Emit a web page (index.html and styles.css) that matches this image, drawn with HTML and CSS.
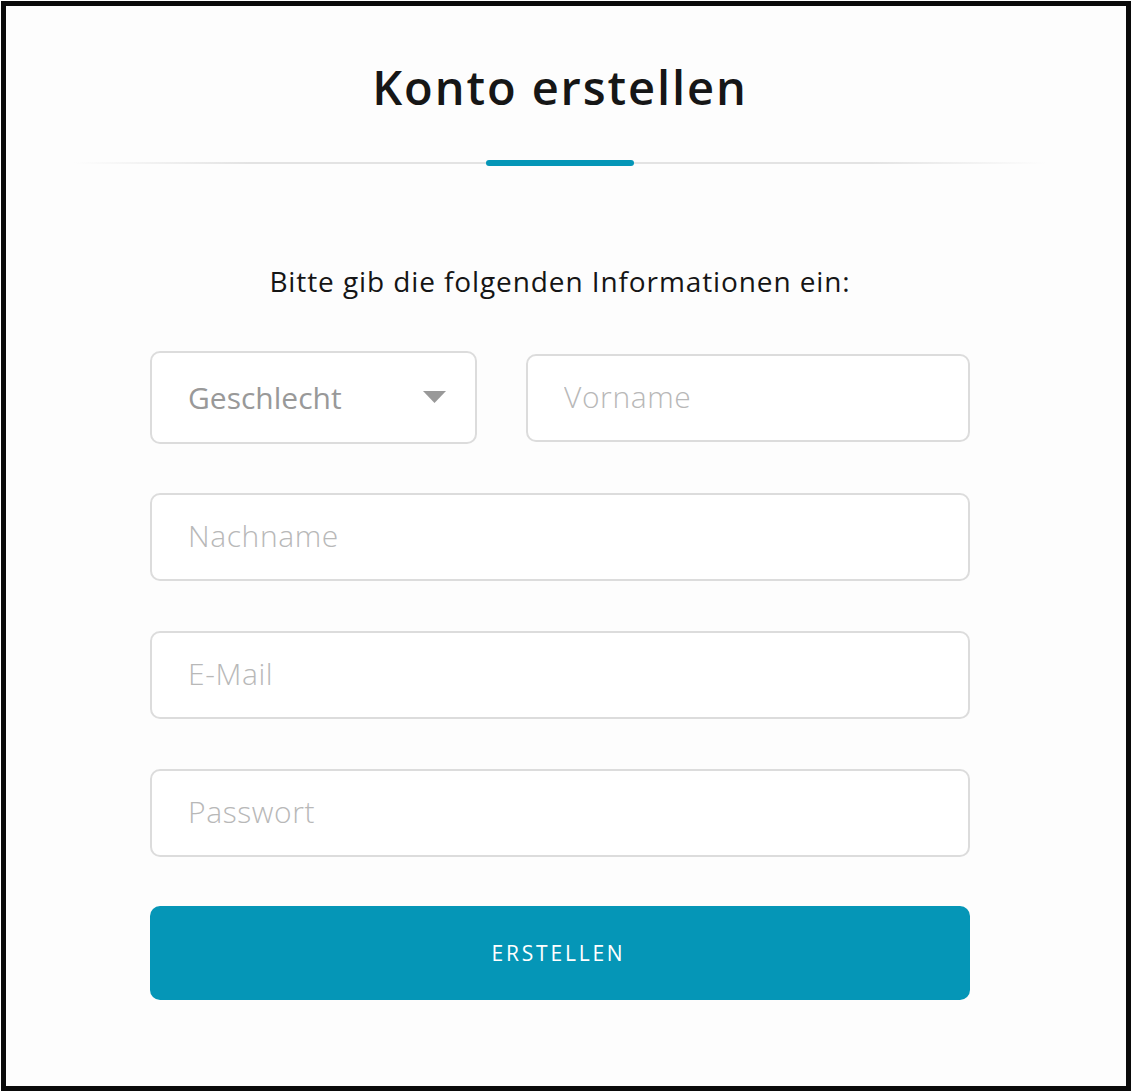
FILE: index.html
```html
<!DOCTYPE html>
<html lang="de">
<head>
<meta charset="utf-8">
<title>Konto erstellen</title>
<link rel="stylesheet" href="styles.css">
</head>
<body>
<div class="frame">
  <div class="content">
    <h1 class="title">Konto erstellen</h1>
    <div class="divider"><span class="divider-bar"></span></div>
    <p class="intro">Bitte gib die folgenden Informationen ein:</p>
    <form class="form">
      <div class="row">
        <div class="select">
          <span class="select-label">Geschlecht</span>
          <svg class="caret" width="23" height="12" viewBox="0 0 23 12"><path d="M0 0H23L11.5 12Z" fill="#999"/></svg>
        </div>
        <input class="field field-first" type="text" placeholder="Vorname">
      </div>
      <input class="field" type="text" placeholder="Nachname">
      <input class="field" type="email" placeholder="E-Mail">
      <input class="field" type="password" placeholder="Passwort">
      <button class="submit" type="button">ERSTELLEN</button>
    </form>
  </div>
</div>
</body>
</html>
```
FILE: styles.css
```css
* { box-sizing: border-box; }
html, body { margin: 0; padding: 0; background: #ffffff; }
body { font-family: "Open Sans", "Liberation Sans", sans-serif; color: #111; }

.frame {
  margin: 1px;
  width: 1130px;
  height: 1090px;
  border: 5px solid #0a0a0a;
  background: #fdfdfd;
  overflow: hidden;
}

.content {
  width: 820px;
  margin-left: 144px;
  padding-top: 51px;
}

.title {
  margin: 0;
  font-size: 47px;
  line-height: 60px;
  font-weight: 600;
  letter-spacing: 1.9px;
  text-align: center;
  color: #161616;
}

.divider {
  margin: 43px -76px 0;
  height: 6px;
  display: flex;
  justify-content: center;
  align-items: center;
  background: linear-gradient(90deg, rgba(226,226,226,0) 0%, #e3e3e3 18%, #e3e3e3 82%, rgba(226,226,226,0) 100%) center / 100% 2px no-repeat;
}

.divider-bar {
  width: 148px;
  height: 6px;
  border-radius: 3px;
  background: #0596b7;
}

.intro {
  margin: 97px 0 0;
  font-size: 28px;
  line-height: 36px;
  letter-spacing: 0.9px;
  text-align: center;
  color: #151515;
}

.form {
  margin-top: 52px;
  display: flex;
  flex-direction: column;
}

.row {
  display: flex;
  align-items: center;
  gap: 49px;
  margin-bottom: 49px;
}

.select {
  width: 327px;
  flex: none;
  height: 93px;
  border: 2px solid #dcdcdc;
  border-radius: 10px;
  background: #fff;
  display: flex;
  align-items: center;
  justify-content: space-between;
  padding: 0 29px 0 36px;
}

.select-label {
  font-size: 30px;
  color: #999;
}

.caret { display: block; margin-top: -1px; }

.field {
  display: block;
  width: 100%;
  height: 88px;
  border: 2px solid #dcdcdc;
  border-radius: 10px;
  background: #fff;
  padding: 0 36px 3px;
  font-family: inherit;
  font-size: 30px;
  font-weight: 300;
  letter-spacing: 0.6px;
  color: #333;
  margin: 0 0 50px;
  outline: none;
}

.field-first {
  flex: 1;
  width: auto;
  min-width: 0;
  margin: 0;
}

.field::placeholder {
  color: #b8b8b8;
  opacity: 1;
}

.submit {
  margin-top: -1px;
  height: 94px;
  width: 100%;
  border: none;
  border-radius: 10px;
  background: #0596b7;
  color: #fff;
  font-family: inherit;
  font-size: 21px;
  letter-spacing: 2.8px;
  padding-left: 3px;
  cursor: pointer;
}
```
